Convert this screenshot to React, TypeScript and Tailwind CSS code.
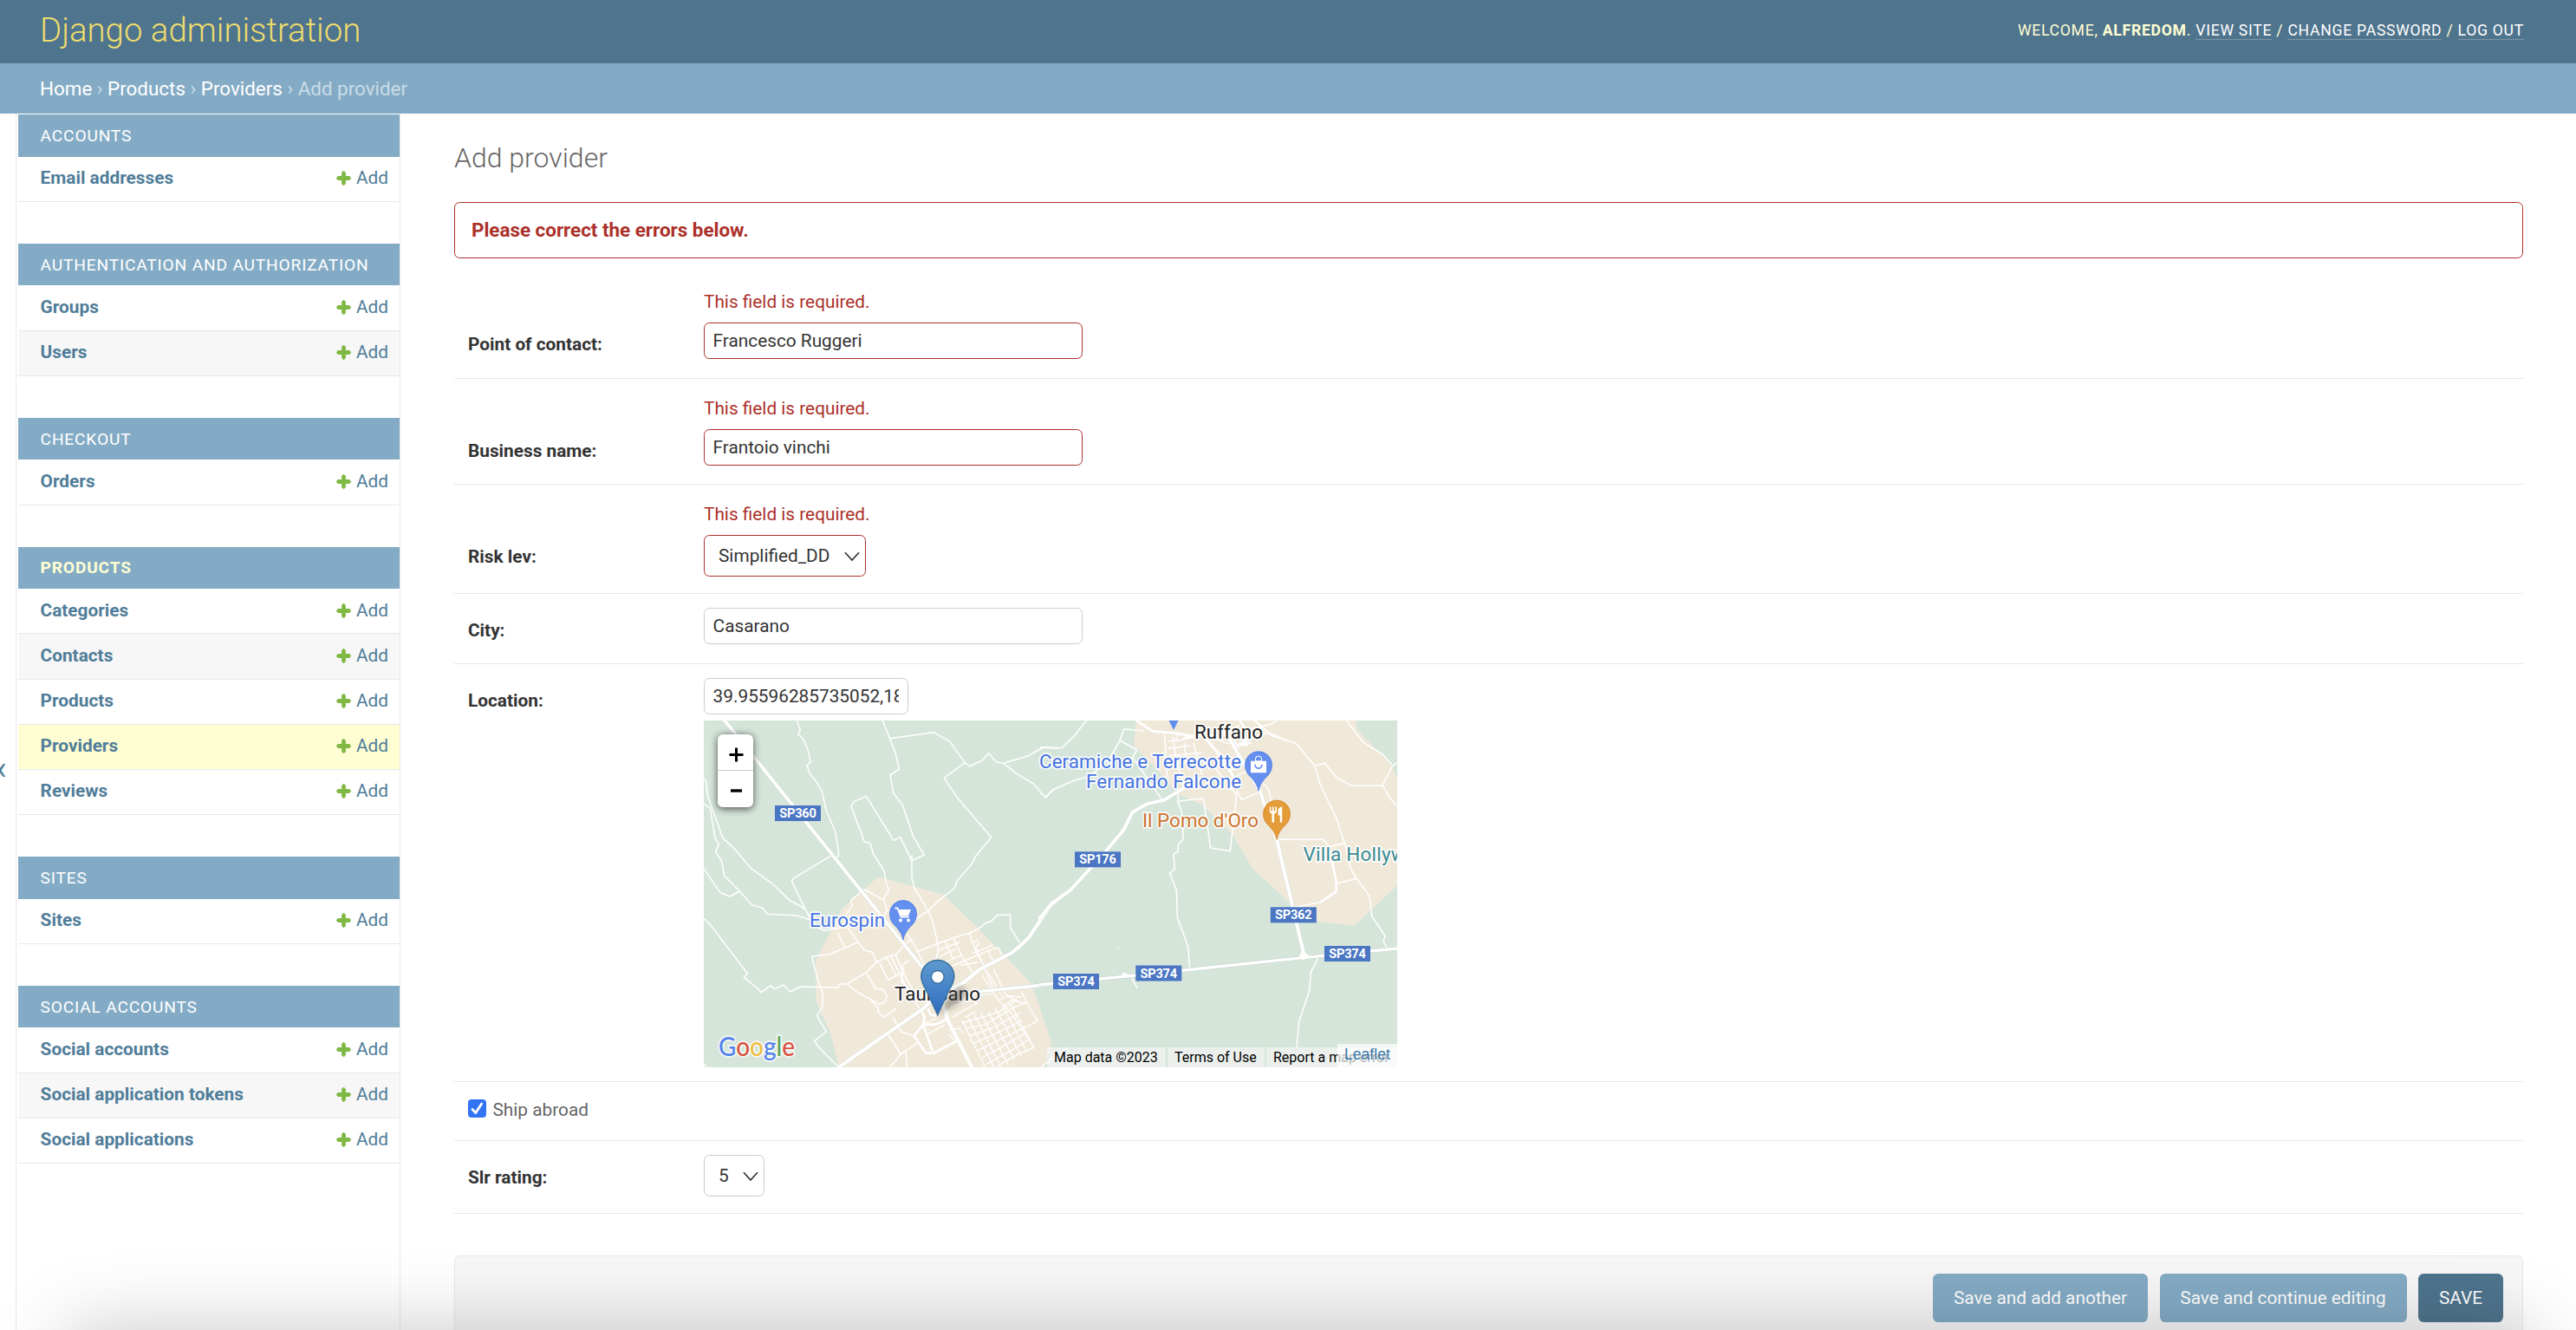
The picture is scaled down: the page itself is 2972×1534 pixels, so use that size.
import React from "react";

type Section = { title: string; items: string[] };

const sections: Section[] = [
  { title: "Accounts", items: ["Email addresses"] },
  { title: "Authentication and Authorization", items: ["Groups", "Users"] },
  { title: "Checkout", items: ["Orders"] },
  { title: "Products", items: ["Categories", "Contacts", "Products", "Providers", "Reviews"] },
  { title: "Sites", items: ["Sites"] },
  { title: "Social Accounts", items: ["Social accounts", "Social application tokens", "Social applications"] },
];

function PlusIcon() {
  return (
    <svg className="h-[17px] w-[17px]" viewBox="0 0 17 17">
      <path d="M8.5 1.4v14.2M1.4 8.5h14.2" stroke="#80b845" strokeWidth="4.8" />
      <path d="M8.5 1.2v14.6M1.2 8.5h14.6" stroke="#80b845" strokeWidth="2.4" strokeLinecap="round" />
    </svg>
  );
}

function SidebarRow({ name, index }: { name: string; index: number }) {
  const bg = name === "Providers" ? "bg-[#fffed3]" : index % 2 === 1 ? "bg-[#f7f7f7]" : "bg-white";
  return (
    <div className={`flex h-[52.2px] items-start justify-between border-b border-[#e8e8e8] pl-[25.6px] pr-[13px] pt-[14.4px] text-[20.8px] leading-[21px] ${bg}`}>
      <a className="font-bold text-[#507d99]">{name}</a>
      <a className="flex items-center gap-[6px] text-[#507d99]">
        <PlusIcon />
        Add
      </a>
    </div>
  );
}

function Sidebar() {
  return (
    <nav className="ml-[18px] h-[1403px] w-[444px] shrink-0 border-x border-[#e8e8e8] pl-[2px] pt-px">
      {sections.map((s) => (
        <section key={s.title} className="mb-[48px]">
          <h2
            className={`h-[48.6px] bg-[#84abc5] pl-[25.6px] text-[19.2px] tracking-[0.8px] uppercase ${
              s.title === "Products" ? "leading-[47.5px] font-bold text-[#fffed3]" : "leading-[49px] text-white"
            }`}
          >
            {s.title}
          </h2>
          {s.items.map((item, i) => (
            <SidebarRow key={item} name={item} index={i} />
          ))}
        </section>
      ))}
    </nav>
  );
}

function Label({ children, className }: { children: React.ReactNode; className: string }) {
  return <label className={`w-[272px] shrink-0 text-[20.8px] leading-[24px] font-bold text-[#333] ${className}`}>{children}</label>;
}

function ErrorText() {
  return <div className="h-[28px] text-[20.8px] leading-[28px] text-[#ac3029]">This field is required.</div>;
}

function Chevron() {
  return (
    <svg className="h-[12px] w-[18px]" viewBox="0 0 18 12" fill="none" stroke="#333" strokeWidth="1.7">
      <path d="M1 1.2 9 10 17 1.2" />
    </svg>
  );
}

const inputBase = "block h-[42px] rounded-[6.4px] border bg-white px-[9.6px] text-[20.8px] text-[#333] outline-none";

/* Thin streets of the western half of the map. */
const westRoads = [
  "M358 33L370 66L362 78L383 102L398 140L405 178L393 188L404 218L425 244L444 274L460 345L492 420L503 492L498 515",
  "M655 33L680 95L700 148L712 201L681 222L692 284L724 326L762 437L799 498L756 518L716 437L693 448L598 295L556 314L546 329L592 453L611 457L622 493L661 555L665 590L677 620L655 655",
  "M680 95L832 74L888 106L940 179L957 192L1000 171L1022 146L1049 178L1073 181L1160 155L1210 126L1260 130",
  "M1073 181L1120 218L1177 252L1218 299L1245 272L1260 266",
  "M940 179L868 232L914 301L1031 437L980 498L957 538L914 585L905 612L850 655L815 690L770 720L720 760",
  "M756 498V578L765 612L800 670L828 725L840 780L848 830L835 870",
  "M36 232L45 245L48 290L102 440L140 475L200 545L276 600L333 655L386 684L340 588L350 577L478 500",
  "M386 684L404 716L430 750L455 760L500 752L555 740",
  "M36 322L58 336L75 440L88 462L77 487L98 520L107 570L160 624L203 671L240 682L255 703L354 707L404 722",
  "M36 545L92 628L126 642L160 624",
  "M36 718L55 735L187 908L175 922L222 960L234 974L268 950L280 962L313 948L335 972L370 954L500 957L504 945H530",
  "M410 850L430 930L447 975V1025L427 1055L460 1110L419 1142L440 1170L500 1230",
  "M410 850L470 842L525 820L570 800L545 765L525 740",
  "M36 1220L46 1233",
  "M498 765L525 820M570 800L592 828L620 835L633 870L598 905L530 945L570 975L612 997L645 1015L665 1005L670 985L655 963L630 960L598 905",
  "M612 997L640 1030V1043L660 1060L700 1030",
  "M633 870L668 852L700 843L740 800L757 790M668 852L702 915L674 932L645 872M684 850L750 980L790 1040M700 843L725 905L757 960",
  "M725 905L720 935L745 960M702 915L725 905M745 862L722 880L730 902",
  "M740 770L770 820L800 880M770 835L845 805L900 785L955 768L985 755L1010 735L1030 728L1053 706H1097V750L1132 805",
  "M545 655L550 675L530 700L525 740M545 655L592 618L660 655L670 690L660 710",
  "M690 1060L720 1110L760 1125M675 1120L718 1188L780 1145M735 1180L740 1233M718 1188L680 1233",
  "M955 768L965 800L1000 870L1040 965M900 785L930 850L970 910M870 795L900 860M845 830L880 815L920 800",
  "M850 850L890 832L910 825M860 875L930 845M880 890L960 855L1020 830L1055 818L1068 845M925 880L985 870",
  "M985 793L968 800M990 800L975 825L1010 890M1020 830L1040 870M965 840L1035 810",
];

/* Dense street grid south-east of the town centre. */
const westGrid = [
  "M930 1070L1010 1233M950 1060L1040 1233M972 1050L1065 1233M995 1045L1090 1225M1020 1040L1110 1205M1045 1030L1135 1195M1070 1020L1155 1180M1095 1010L1178 1165",
  "M930 1080L1000 1060L1060 1040L1120 1000M940 1100L1010 1085L1100 1030L1150 1010M955 1125L1040 1095L1130 1045M970 1150L1060 1110L1140 1070M985 1175L1075 1130L1145 1095M1000 1200L1090 1150L1150 1115M1015 1222L1105 1172L1165 1135M1050 1230L1120 1190L1178 1165",
  "M1000 915L1055 1000L1100 1045L1180 1165M1020 905L1070 990M1040 895L1080 980L1130 1010M1190 1073L1130 1105M1135 970L1160 1020L1190 1073M1060 1000L1090 985L1135 990M1070 1020L1105 1000L1150 1010",
  "M884 1105L920 1098L935 1115M884 1120L905 1140M895 1060L930 1040L985 1010M890 1025L960 1000M940 1060L975 1040M975 1010L985 985L1040 975",
  "M810 1120L870 1085M800 1080L840 1065M1205 1233L1240 1200L1260 1180",
];

/* Thin streets of the eastern half of the map. */
const eastRoads = [
  "M0 125L75 128L120 85L160 33M276 102L290 63L360 68M276 102L240 165L175 225L120 240L45 272L20 299L0 282M276 102L335 135L320 160L420 305",
  "M430 80L435 150L440 230M460 90L470 165L500 270M440 130L520 120M445 155L560 145M470 100L480 75M500 110L505 180M440 105L500 100M530 110L560 220M480 180L560 175",
  "M475 285L480 312L565 302L590 474L658 485L680 290L640 240L600 190M680 275L697 308L770 275M650 210L740 170M660 235L750 190",
  "M475 310L490 350L496 442L477 465L478 487L462 495L466 547L449 562L472 620L475 715L512 815L518 890",
  "M612 100L660 70L740 60L800 45L820 33M700 100L790 75L860 105M590 80L640 110L720 120M640 60L690 130M745 33L790 75M560 70L600 90L690 50",
  "M740 33L800 85L885 112L950 190L970 255L1025 370L1055 460L1075 545L1095 580L1140 640L1148 710L1195 780L1188 795L1200 820",
  "M950 190L985 180L1025 230L1075 258L1185 258L1220 190L1235 180M1185 258L1210 300L1235 330M1060 33L1120 110L1185 150L1218 185",
  "M820 445H980L1000 470L1055 457M1025 598L1095 580M875 680L970 662",
  "M315 920L337 960M962 855L937 905L932 970L896 1075L888 1165M24 1222L90 1165L130 1222",
  "M760 240L790 270L800 310L830 350",
];

function Shield({ x, y, children }: { x: number; y: number; children: string }) {
  return (
    <g>
      <rect x={x} y={y} width="53" height="18" fill="#4a76c3" />
      <text x={x + 26.5} y={y + 14} textAnchor="middle" fontSize="14.6" fontWeight="700" fill="#fff" textLength="42.5">
        {children}
      </text>
    </g>
  );
}

function Pin({ x, y, fill, edge, children }: { x: number; y: number; fill: string; edge: string; children?: React.ReactNode }) {
  return (
    <g transform={`translate(${x} ${y})`}>
      <path
        d="M0 46C-1 39-6 33-10 29C-14 25-15.5 20.500-15.500 16A15.500 15.500 0 0 1 15.500 16C15.500 20.500 14 25 10 29C6 33 1 39 0 46Z"
        fill={fill}
        stroke={edge}
        strokeWidth="0.8"
      />
      {children}
    </g>
  );
}

function MapDrawing() {
  return (
    <svg className="block h-[400px] w-[800px]" viewBox="0 0 800 400" fontFamily="Roboto, 'Liberation Sans', sans-serif">
      <defs>
        <linearGradient id="marker" x1="0" y1="0" x2="0" y2="1">
          <stop offset="0" stopColor="#5f9ad0" />
          <stop offset="1" stopColor="#2f6cbf" />
        </linearGradient>
        <filter id="soft" x="-50%" y="-50%" width="200%" height="200%">
          <feGaussianBlur stdDeviation="3" />
        </filter>
      </defs>
      <rect width="800" height="400" fill="#d5e5da" />

      <g transform="translate(-12 -11) scale(.333333)" fill="none" stroke="#fff" strokeLinejoin="round">
        <path
          fill="#f0e9da"
          stroke="none"
          d="M640 574L865 635L975 742L1085 855L1172 945L1240 1150L1215 1233H503L475 1115L424 1005V865L515 685L555 648Z"
        />
        {westRoads.map((d) => (
          <path key={d} d={d} strokeWidth="4.600" />
        ))}
        {westGrid.map((d) => (
          <path key={d} d={d} strokeWidth="4" />
        ))}
        <path d="M787 1030L800 1060L795 1085L763 1125L805 1183L830 1185L915 1140M795 1085L828 1178M795 1085L840 1085L880 1065M812 1030L820 1050L840 1055M878 1035V1070" strokeWidth="8" />
        <g stroke="#c5d3cc" strokeWidth="13.500">
          <path d="M106 30L845 952" />
          <path d="M1260 655L1235 675L1160 785L1132 812L1100 838L990 895L935 940L845 985L795 1030L500 1235" />
          <path d="M980 972L1175 952L1260 943" />
        </g>
        <path d="M106 30L845 952L880 1070L965 1235" strokeWidth="11.500" />
        <path d="M1260 655L1235 675L1160 785L1132 812L1100 838L990 895L935 940L845 985L795 1030L500 1235" strokeWidth="12" />
        <path d="M980 972L1175 952L1260 943" strokeWidth="11" />
      </g>

      <g transform="translate(388 -11) scale(.333333)" fill="none" stroke="#fff" strokeLinejoin="round">
        <path
          fill="#f0e9da"
          stroke="none"
          d="M332 33H1093L1098 65L1218 190L1240 245V600L1088 743L965 730L860 660L735 545L665 425L560 325L475 285L420 220L325 120Z"
        />
        {eastRoads.map((d) => (
          <path key={d} d={d} strokeWidth="4.600" />
        ))}
        <path d="M332 33L390 70L460 76L540 88L495 95M690 33L735 90L690 115L730 110M1010 520L1025 590V625L970 662" strokeWidth="8" />
        <g stroke="#c5d3cc" strokeWidth="13.500">
          <path d="M-5 722L38 668L105 620L215 500L290 410L320 350L370 322L430 308L500 265L540 230" />
          <path d="M655 95L760 275L820 450L915 850" />
          <path d="M-5 948L330 915L915 853L1236 822" />
        </g>
        <path d="M-5 722L38 668L105 620L215 500L290 410L320 350L370 322L430 308L500 265L540 230" strokeWidth="12" />
        <path d="M555 75L620 150L690 260" strokeWidth="9" />
        <path d="M655 95L760 275L820 450L915 850" strokeWidth="12" />
        <path d="M-5 948L330 915L915 853L1236 822" strokeWidth="10" />
        <circle cx="293" cy="914" r="9" fill="#fff" stroke="none" />
        <path d="M895 852L908 830L935 850L910 862Z" fill="#fff" />
        <path d="M264 821h7" strokeWidth="3" />
      </g>

      <Shield x={82} y={98}>SP360</Shield>
      <Shield x={428} y={151.300}>SP176</Shield>
      <Shield x={653.800} y={215.300}>SP362</Shield>
      <Shield x={716} y={260}>SP374</Shield>
      <Shield x={498.300} y={282.500}>SP374</Shield>
      <Shield x={403} y={292}>SP374</Shield>

      <g fontSize="22.400" paintOrder="stroke" stroke="#fff" strokeWidth="3.600" strokeLinejoin="round" strokeOpacity=".85">
        <text x="566" y="21" textLength="79" fill="#202124">Ruffano</text>
        <text x="387" y="55.300" textLength="233" fill="#4573e2">Ceramiche e Terrecotte</text>
        <text x="441" y="77.700" textLength="179" fill="#4573e2">Fernando Falcone</text>
        <text x="506" y="123.300" textLength="134" fill="#cd732b">Il Pomo d'Oro</text>
        <text x="691.500" y="162.300" fill="#398a92" letterSpacing=".25">Villa Hollywood</text>
        <text x="122" y="238" textLength="87" fill="#4573e2">Eurospin</text>
        <text x="220" y="322.500" textLength="99" fill="#202124">Taurisano</text>
      </g>

      <path d="M536.500 0H547.500L542 11Z" fill="#5f8deb" />
      <Pin x={640} y={35.200} fill="#6590ef" edge="#4573e2">
        <path d="M-9 11.500H9V25H-9ZM-4 11.500V9.500A4 4 0 0 1 4 9.500V11.500" fill="#fff" />
        <path d="M-3 11V9.500A3 3 0 0 1 3 9.500V11" fill="#6590ef" />
        <path d="M-4 15.500A4 4.500 0 0 0 4 15.500" fill="none" stroke="#6590ef" strokeWidth="1.800" />
      </Pin>
      <Pin x={661} y={91.500} fill="#e49c39" edge="#cf8429">
        <path d="M-8.200 8V13Q-8.200 15.500-5.500 16V26H-2.900V16Q0 15.500 0 13V8H-1.600V13H-3.300V8H-5V13H-6.600V8ZM6.200 8V26H3.800V18H1.600V12Q2 8.500 6.200 8Z" fill="#fff" />
      </Pin>
      <Pin x={230} y={207} fill="#6590ef" edge="#4573e2">
        <path d="M-9.500 9.500H-6.500L-2.500 19.500H6.500" fill="none" stroke="#fff" strokeWidth="1.800" />
        <path d="M-5.500 11H9L6 18.300H-2.800Z" fill="#fff" />
        <circle cx="-3" cy="23.500" r="2" fill="#fff" />
        <circle cx="6" cy="23.500" r="2" fill="#fff" />
      </Pin>

      <path d="M270 340L283 318Q294 304 301 309Q306 314 294 326Z" fill="#4b463d" opacity=".45" filter="url(#soft)" />
      <path
        d="M269.800 339.500L257 312C254 306 250.800 302 250.800 295.500A19 19 0 0 1 288.800 295.500C288.800 302 285.500 306 282.500 312Z"
        fill="url(#marker)"
        stroke="#39729f"
        strokeWidth="1.500"
      />
      <circle cx="269.800" cy="295.800" r="7.300" fill="#fff" stroke="#39729f" strokeWidth="1.300" />

      <text
        x="17"
        y="387.300"
        fontFamily="Lato, sans-serif"
        fontSize="31"
        fontWeight="500"
        textLength="88"
        lengthAdjust="spacingAndGlyphs"
        paintOrder="stroke"
        stroke="#fff"
        strokeOpacity=".8"
        strokeWidth="3.600"
        strokeLinejoin="round"
      >
        <tspan fill="#5383ec">G</tspan>
        <tspan fill="#d85140">o</tspan>
        <tspan fill="#f1be42">o</tspan>
        <tspan fill="#5383ec">g</tspan>
        <tspan fill="#58a55c">l</tspan>
        <tspan fill="#d85140">e</tspan>
      </text>
    </svg>
  );
}

function LocationMap() {
  return (
    <div className="relative mt-[7px] h-[400px] w-[800px] overflow-hidden">
      <MapDrawing />
      <div className="absolute top-[16px] left-[16px] flex w-[41px] flex-col rounded-[6px] bg-white shadow-[0_1.6px_8px_rgba(0,0,0,0.65)]">
        <div className="flex h-[42px] items-center justify-center border-b border-[#ccc]">
          <svg className="mt-[5px] ml-[2px] h-[17px] w-[17px]" viewBox="0 0 17 17" stroke="#000" strokeWidth="3">
            <path d="M8.500 .5v16M.5 8.500h16" />
          </svg>
        </div>
        <div className="flex h-[42px] items-center justify-center">
          <svg className="mt-[3px] ml-[2px] h-[4px] w-[13px]" viewBox="0 0 13 4" stroke="#000" strokeWidth="3.400">
            <path d="M0 2h13" />
          </svg>
        </div>
      </div>
      <div className="absolute right-0 bottom-0 flex h-[23px] gap-[2px] text-[16px] leading-[23px] whitespace-nowrap text-black">
        <span className="w-[137px] bg-[#f5f5f5]/70 pl-[8px]">Map data ©2023</span>
        <span className="w-[112px] bg-[#f5f5f5]/70 pl-[8px]">Terms of Use</span>
        <span className="w-[151px] bg-[#f5f5f5]/70 pl-[8px]">Report a map error</span>
      </div>
      <div className="absolute right-0 bottom-0 h-[27px] w-[69px] bg-white/70 pl-[8px] font-['Liberation_Sans',sans-serif] text-[17.6px] leading-[25px] text-[#3a78a8]">
        Leaflet
      </div>
    </div>
  );
}

const formRow = "flex border-b border-[#e8e8e8] pl-[16px]";

function ProviderForm() {
  return (
    <main className="ml-[62px] w-[2387px] shrink-0">
      <h1 className="mt-[31px] h-[40px] text-[32px] leading-[40px] font-light text-[#666]">Add provider</h1>
      <p className="mt-[31px] h-[65px] rounded-[6.4px] border border-[#ac3029] pl-[19px] text-[22.4px] leading-[63px] font-bold text-[#ac3029]">
        Please correct the errors below.
      </p>
      <div className={`${formRow} h-[139px] pt-[36px]`}>
        <Label className="pt-[51px]">Point of contact:</Label>
        <div>
          <ErrorText />
          <input readOnly value="Francesco Ruggeri" className={`${inputBase} mt-[10px] w-[437px] border-[#ac3029]`} />
        </div>
      </div>
      <div className={`${formRow} h-[122px] pt-[20px]`}>
        <Label className="pt-[51px]">Business name:</Label>
        <div>
          <ErrorText />
          <input readOnly value="Frantoio vinchi" className={`${inputBase} mt-[10px] w-[437px] border-[#ac3029]`} />
        </div>
      </div>
      <div className={`${formRow} h-[126px] pt-[20px]`}>
        <Label className="pt-[51px]">Risk lev:</Label>
        <div>
          <ErrorText />
          <div className="mt-[10px] flex h-[48px] w-[187px] items-center justify-between rounded-[6.4px] border border-[#ac3029] pt-px pr-[6px] pl-[16px] text-[20.8px] text-[#333]">
            Simplified_DD
            <Chevron />
          </div>
        </div>
      </div>
      <div className={`${formRow} h-[81px] pt-[16px]`}>
        <Label className="pt-[14px]">City:</Label>
        <input readOnly value="Casarano" className={`${inputBase} w-[437px] border-[#ccc]`} />
      </div>
      <div className={`${formRow} h-[482px] pt-[16px]`}>
        <Label className="pt-[14px]">Location:</Label>
        <div>
          <input readOnly value="39.95596285735052,18.1733588" className={`${inputBase} w-[236px] border-[#ccc]`} />
          <LocationMap />
        </div>
      </div>
      <div className={`${formRow} h-[68px] items-start pt-[20px]`}>
        <span className="flex h-[21px] w-[21px] items-center justify-center rounded-[4px] bg-[#3374f5]">
          <svg className="h-[17px] w-[17px]" viewBox="0 0 17 17" fill="none" stroke="#fff" strokeWidth="2.800" strokeLinecap="round" strokeLinejoin="round">
            <path d="M3 9.500 6.800 13.600 13.600 3.200" />
          </svg>
        </span>
        <span className="ml-[7.5px] text-[20.800px] leading-[24px] text-[#666]">Ship abroad</span>
      </div>
      <div className={`${formRow} h-[84px] pt-[16px]`}>
        <Label className="pt-[14px]">Slr rating:</Label>
        <div className="flex h-[48px] w-[70px] items-center justify-between rounded-[6.4px] border border-[#ccc] pt-px pr-[6px] pl-[16px] text-[20.8px] text-[#333]">
          5
          <Chevron />
        </div>
      </div>
      <div className="mt-[48px] flex h-[98px] justify-end gap-[13.5px] rounded-[6.4px] border border-[#e8e8e8] bg-[#f7f7f7] pt-[20px] pr-[22px] text-[20.8px] leading-[56px] text-white">
        <button className="h-[56px] w-[248px] rounded-[6.4px] bg-[#84abc5]">Save and add another</button>
        <button className="h-[56px] w-[285px] rounded-[6.4px] bg-[#84abc5]">Save and continue editing</button>
        <button className="h-[56px] w-[98px] rounded-[6.4px] bg-[#4f748d] uppercase">Save</button>
      </div>
    </main>
  );
}

export default function App() {
  return (
    <div className="relative h-[1534px] w-[2972px] overflow-hidden bg-white font-[Roboto,'Liberation_Sans',sans-serif]">
      <header className="flex h-[73px] items-start justify-between bg-[#4f748d] pr-[60px] pl-[46px]">
        <span className="pt-[11px] text-[38.4px] leading-[48px] font-light text-[#eedc6d]">Django administration</span>
        <div className="pt-[23px] text-[17.6px] leading-[24px] tracking-[0.73px] text-[#fffed3] uppercase">
          Welcome, <strong className="font-bold">alfredom</strong>.{" "}
          <a className="border-b border-white/25 text-white">View site</a> /{" "}
          <a className="border-b border-white/25 text-white">Change password</a> /{" "}
          <a className="border-b border-white/25 text-white">Log out</a>
        </div>
      </header>
      <div className="h-[58px] bg-[#84abc5] pl-[46px] text-[22.4px] leading-[58px] text-[#c9dce7]">
        <a className="text-white">Home</a> › <a className="text-white">Products</a> › <a className="text-white">Providers</a> › Add provider
      </div>
      <div className="flex">
        <Sidebar />
        <ProviderForm />
      </div>
      <button className="absolute top-[871px] left-[-10px] text-[38px] leading-[30px] text-[#507d99]">«</button>
      <div className="pointer-events-none absolute top-[1534px] left-[75px] h-[400px] w-[2850px] rounded-[20px] shadow-[0_0_90px_rgba(0,0,0,0.22)]" />
    </div>
  );
}
